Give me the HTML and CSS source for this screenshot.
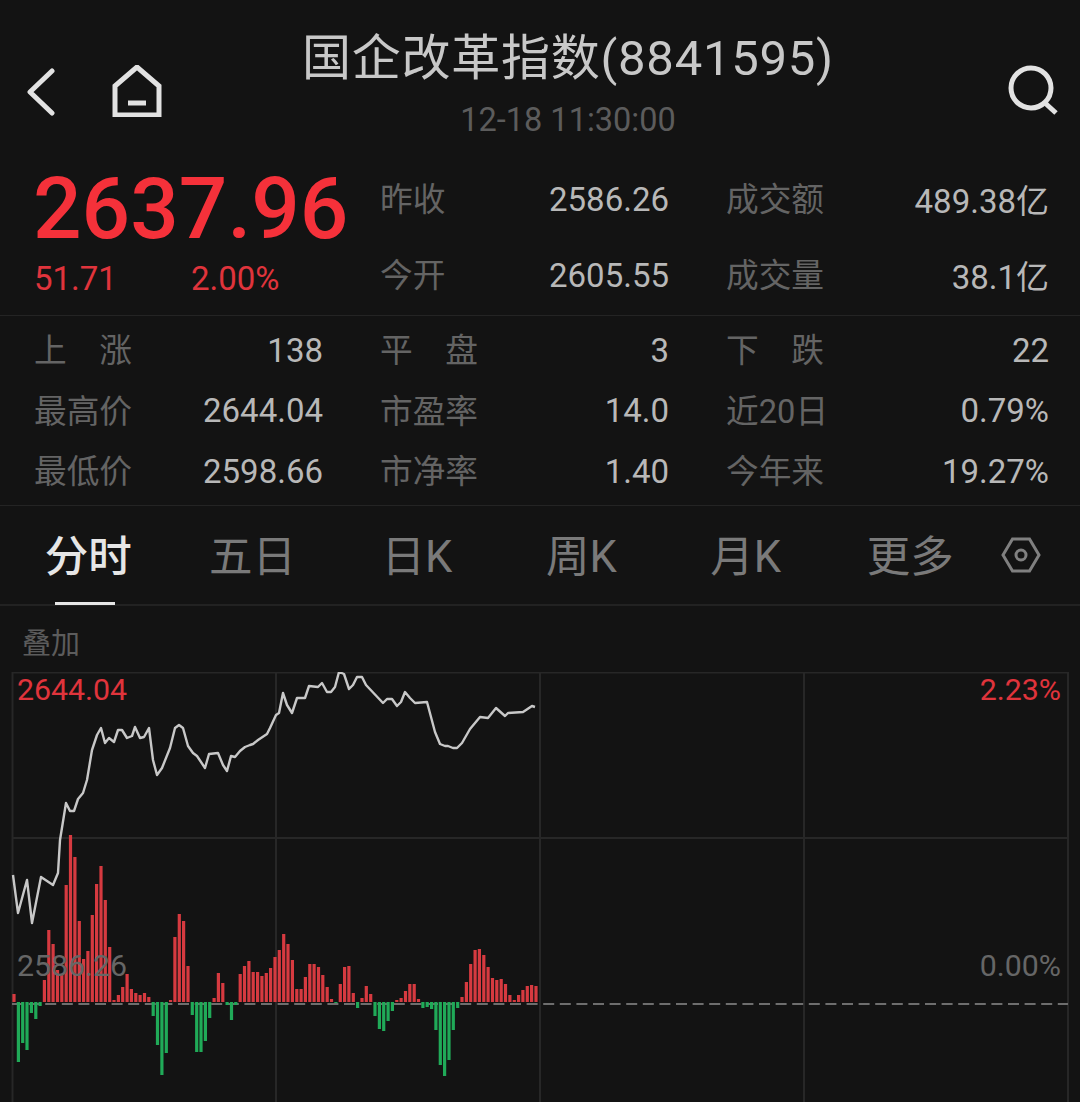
FILE: index.html
```html
<!DOCTYPE html>
<html lang="zh-CN">
<head>
  <meta charset="UTF-8" />
  <meta name="viewport" content="width=device-width, initial-scale=1.0" />
  <title>国企改革指数</title>
  <link rel="stylesheet" href="styles.css">
</head>
<body>
  <div class="app">
    <header class="topbar">
      <div class="nav-icons">
        <svg class="icon-back" width="36" height="52" viewBox="0 0 36 52">
          <polyline points="25,6 3,27 25,48" />
        </svg>
        <svg class="icon-home" width="52" height="52" viewBox="0 0 52 52">
          <path d="M4 50 V21 L26 2 L48 21 V50 Z" />
          <path d="M17 38 H35" />
        </svg>
      </div>
      <div class="title-block">
        <div class="title">国企改革指数(8841595)</div>
        <div class="date">12-18 11:30:00</div>
      </div>
      <div class="search-wrap">
        <svg class="icon-search" width="54" height="54" viewBox="0 0 54 54">
          <circle cx="25" cy="24" r="20" />
          <path d="M39 39 L50 49" />
        </svg>
      </div>
    </header>

    <section class="stats stats-top">
      <div class="price-cell">
        <div class="price">2637.96</div>
        <div class="change"><span class="change-val">51.71</span><span>2.00%</span></div>
      </div>
      <div class="stat"><span class="label">昨收</span><span class="value">2586.26</span></div>
      <div class="stat"><span class="label">成交额</span><span class="value">489.38亿</span></div>
      <div class="stat"><span class="label">今开</span><span class="value">2605.55</span></div>
      <div class="stat"><span class="label">成交量</span><span class="value">38.1亿</span></div>
    </section>

    <section class="stats stats-bottom">
      <div class="stat"><span class="label">上　涨</span><span class="value">138</span></div>
      <div class="stat"><span class="label">平　盘</span><span class="value">3</span></div>
      <div class="stat"><span class="label">下　跌</span><span class="value">22</span></div>
      <div class="stat"><span class="label">最高价</span><span class="value">2644.04</span></div>
      <div class="stat"><span class="label">市盈率</span><span class="value">14.0</span></div>
      <div class="stat"><span class="label">近20日</span><span class="value">0.79%</span></div>
      <div class="stat"><span class="label">最低价</span><span class="value">2598.66</span></div>
      <div class="stat"><span class="label">市净率</span><span class="value">1.40</span></div>
      <div class="stat"><span class="label">今年来</span><span class="value">19.27%</span></div>
    </section>

    <nav class="tabs">
      <div class="tab active">分时</div>
      <div class="tab">五日</div>
      <div class="tab">日K</div>
      <div class="tab">周K</div>
      <div class="tab">月K</div>
      <div class="tab">更多</div>
      <svg class="icon-hex" width="40" height="36" viewBox="0 0 40 36">
        <polygon points="2,18 11.5,2 28.5,2 38,18 28.5,34 11.5,34" />
        <circle cx="20" cy="18" r="5" />
      </svg>
    </nav>

    <div class="overlay-row">叠加</div>

    <div class="chart">
      <svg class="chart-svg" width="1080" height="430" viewBox="0 672 1080 430">
        <g class="grid">
          <path d="M12 672.5 H1068 M12 838 H1068" />
          <path d="M12.5 672 V1102 M276 672 V1102 M540 672 V1102 M804 672 V1102 M1068 672 V1102" />
        </g>
        <path class="base" d="M12 1004 H1068" />
        <path id="barsUp" class="bars-up" />
        <path id="barsDown" class="bars-down" />
        <polyline id="priceLine" class="price-line" />
      </svg>
      <span class="axis axis-left up axis-top">2644.04</span>
      <span class="axis axis-right up axis-top">2.23%</span>
      <span class="axis axis-left flat axis-mid">2586.26</span>
      <span class="axis axis-right flat axis-mid">0.00%</span>
    </div>
  </div>

  <script src="chart.js"></script>
</body>
</html>
```

FILE: styles.css
```css
* {
  box-sizing: border-box;
}
body {
  margin: 0;
  background: #131313;
  font-family: Roboto, "Noto Sans CJK SC", sans-serif;
}
.app {
  width: 1080px;
  height: 1102px;
  overflow: hidden;
  background: #131313;
  color: #bdbdbd;
}

.topbar {
  display: grid;
  grid-template-columns: 276px 584px 1fr;
  height: 160px;
}
.nav-icons {
  display: flex;
  align-items: flex-start;
  gap: 48px;
  padding: 65px 0 0 27px;
}
.icon-back polyline,
.icon-home path,
.icon-search circle,
.icon-search path {
  fill: none;
  stroke: #e2e2e2;
  stroke-width: 5;
}
.icon-back polyline {
  stroke-linecap: round;
  stroke-linejoin: round;
}
.title-block {
  text-align: center;
  padding-top: 29px;
}
.title {
  font-size: 49px;
  line-height: 60px;
  color: #c8c8c8;
  letter-spacing: 0.75px;
  white-space: nowrap;
}
.date {
  margin-top: 13px;
  font-size: 32.5px;
  line-height: 36px;
  color: #5c5c5c;
}
.search-wrap {
  padding: 64px 0 0 146px;
}

.stats {
  display: grid;
  grid-template-columns: 289px 289px 323px;
  column-gap: 57px;
  padding-left: 34px;
}
.stats-top {
  grid-auto-rows: 76px;
  height: 156px;
  padding-top: 1px;
  border-bottom: 1px solid #242424;
}
.stats-bottom {
  grid-auto-rows: 60.5px;
  height: 190px;
  padding-top: 4px;
  border-bottom: 1px solid #242424;
}
.stat {
  display: flex;
  justify-content: space-between;
  align-items: center;
}
.label {
  padding-bottom: 5px;
  font-size: 32.7px;
  color: #646464;
  white-space: nowrap;
}
.value {
  font-size: 33px;
  color: #b8b8b8;
  white-space: nowrap;
}

.price-cell {
  grid-row: span 2;
  color: #f5313a;
}
.price {
  margin-top: 4px;
  margin-left: -1px;
  font-size: 85.5px;
  font-weight: 500;
  line-height: 88px;
}
.change {
  display: flex;
  margin-top: 6px;
  font-size: 33px;
  line-height: 40px;
  color: #e0343c;
}
.change-val {
  width: 157px;
}

.tabs {
  position: relative;
  display: grid;
  grid-template-columns: repeat(6, 164.4px) 1fr;
  align-items: center;
  height: 100px;
  padding-left: 6px;
  border-bottom: 2px solid #222;
}
.tab {
  position: relative;
  height: 100%;
  display: flex;
  align-items: center;
  justify-content: center;
  padding-bottom: 4px;
  font-size: 43.5px;
  color: #7a7a7a;
}
.tab.active {
  color: #e6e6e6;
  font-weight: 500;
}
.tab.active::after {
  content: "";
  position: absolute;
  left: 50%;
  bottom: -1px;
  width: 60px;
  height: 3px;
  margin-left: -33px;
  background: #e6e6e6;
}
.icon-hex {
  margin-left: 9px;
}
.icon-hex polygon,
.icon-hex circle {
  fill: none;
  stroke: #808080;
  stroke-width: 3;
}

.overlay-row {
  height: 66px;
  padding: 20px 0 0 22px;
  font-size: 29px;
  line-height: 36px;
  color: #5c5c5c;
}

.chart {
  position: relative;
  height: 430px;
}
.chart-svg {
  display: block;
}
.grid path {
  fill: none;
  stroke: #272727;
  stroke-width: 2;
}
.base {
  fill: none;
  stroke: #6e6e6e;
  stroke-width: 2;
  stroke-dasharray: 11 5.6;
}
.bars-up {
  fill: none;
  stroke: #d63a40;
  stroke-width: 3.2;
}
.bars-down {
  fill: none;
  stroke: #20aa58;
  stroke-width: 3.2;
}
.price-line {
  fill: none;
  stroke: #c8c8c8;
  stroke-width: 2.4;
  stroke-linejoin: round;
}
.axis {
  position: absolute;
  font-size: 30.3px;
  line-height: 34px;
}
.axis-left {
  left: 17px;
}
.axis-right {
  right: 19px;
}
.axis-top {
  top: 1px;
}
.axis-mid {
  top: 277px;
}
.up {
  color: #e0343c;
}
.flat {
  color: #666;
}
```

FILE: chart.js
```js
// signed volume per minute: positive is red, negative is green
const volumes = [
  8, -60, -41, -48, -11, -17, -4, 22, 72, 58, 32, 28, 117, 167, 145, 81, 43, 51, 87, 118, 136, 102, 55,
  2, 7, 15, 28, 13, 9, 7, 9, 5, -14, -43, -73, -51, 2, 65, 88, 81, 36, -13, -50, -50, -39, -16,
  4, 29, 19, -3, -18, -3, 28, 36, 41, 30, 30, 26, 29, 34, 45, 52, 68, 58, 42, 13, 13, 25, 38, 38, 35, 27, 15, 3,
  -1, 18, 35, 36, 9, -6, 4, 16, 8, -14, -27, -29, -19, -9, 2, 4, 11, 18, 18, 3,
  -6, -5, -7, -28, -63, -74, -58, -28, -6, 5, 20, 38, 52, 53, 47, 35, 24, 22, 23, 18, 7, 2, 7, 12, 16, 17, 16
];

const prices = [
  [13,875],[18,913],[27,880],[32,923],[41,877],[53,885],[58,873],[60,840],[66,803],[70,811],[74,811],
  [78,799],[83,793],[87,780],[92,750],[97,735],[101,728],[105,743],[109,738],[114,742],[118,730],[122,730],
  [127,738],[132,736],[135,727],[140,738],[144,737],[149,728],[153,760],[157,775],[162,768],[170,748],
  [175,728],[179,725],[183,728],[188,746],[193,753],[197,756],[205,768],[209,754],[218,753],[223,765],
  [227,771],[231,756],[235,757],[240,751],[245,747],[250,745],[253,744],[258,740],[267,734],[270,728],
  [276,715],[279,713],[283,693],[287,705],[292,713],[297,698],[305,698],[309,686],[318,687],[322,683],
  [327,692],[331,692],[335,687],[339,672],[344,674],[349,689],[353,685],[357,677],[362,677],[366,685],
  [383,703],[387,699],[392,699],[397,706],[401,702],[405,692],[410,698],[415,703],[427,702],[435,732],
  [440,744],[445,746],[448,746],[453,748],[457,748],[462,743],[470,729],[480,717],[488,718],[496,708],
  [505,716],[508,713],[523,712],[532,706],[535,707]
];

const BASE_Y = 1002;
const STEP = 4.35;

let up = '';
let down = '';
volumes.forEach((v, i) => {
  const x = (14 + STEP * i).toFixed(1);
  if (v > 0) {
    up += `M${x} ${BASE_Y} V${BASE_Y - v} `;
  } else {
    down += `M${x} ${BASE_Y} V${BASE_Y - v} `;
  }
});

document.getElementById('barsUp').setAttribute('d', up);
document.getElementById('barsDown').setAttribute('d', down);
document.getElementById('priceLine').setAttribute('points', prices.map(p => p.join(',')).join(' '));
```
